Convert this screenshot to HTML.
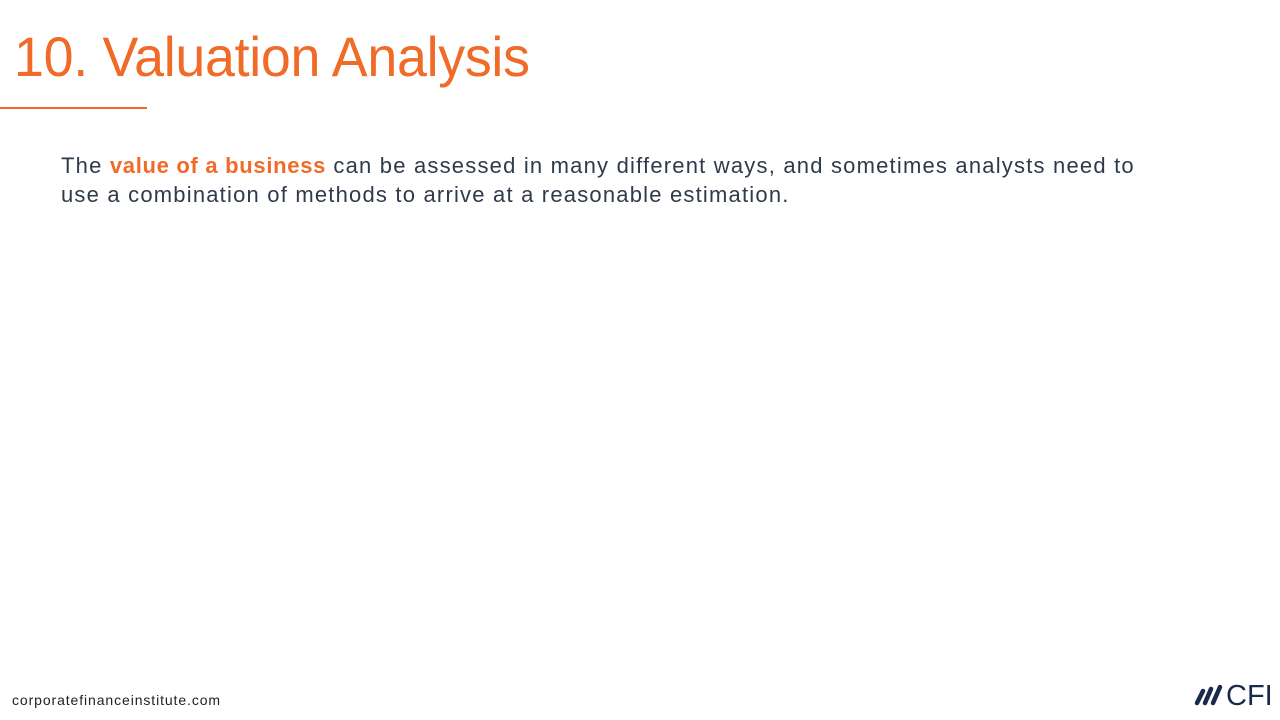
<!DOCTYPE html>
<html><head><style>
html,body{margin:0;padding:0;width:1280px;height:720px;background:#fff;overflow:hidden;position:relative;font-family:"Liberation Sans",sans-serif}
.t{position:absolute;left:14px;top:24px;font-size:56px;color:#f06a28;white-space:nowrap;letter-spacing:-0.3px;transform:scaleX(0.96);transform-origin:0 0}
.ln{position:absolute;left:0;top:107px;width:147px;height:2px;background:#f06a28}
.b{position:absolute;left:61px;top:151px;font-size:22px;line-height:29px;color:#2f3a4a;white-space:nowrap;letter-spacing:1.2px}
.b b{color:#f06a28;letter-spacing:0.7px}
.f{position:absolute;left:12px;top:692px;font-size:14px;color:#222;letter-spacing:0.9px}
.logo{position:absolute;left:1194px;top:682px}
</style></head><body>
<div class="t">10. Valuation Analysis</div>
<div class="ln"></div>
<div class="b">The <b>value of a business</b> can be assessed in many different ways, and sometimes analysts need to<br>use a combination of methods to arrive at a reasonable estimation.</div>
<div class="f">corporatefinanceinstitute.com</div>
<div class="logo"><svg width="80" height="26" viewBox="0 0 80 26">
<g stroke="#1b2a4a" stroke-width="4.5" stroke-linecap="round" fill="none">
<line x1="3" y1="21" x2="9" y2="9"/><line x1="11" y1="21" x2="17" y2="7"/><line x1="19" y1="21" x2="26" y2="5"/></g>
<text x="32" y="23" font-family="Liberation Sans" font-size="29" fill="#1b2a4a">CFI</text></svg></div>
</body></html>
